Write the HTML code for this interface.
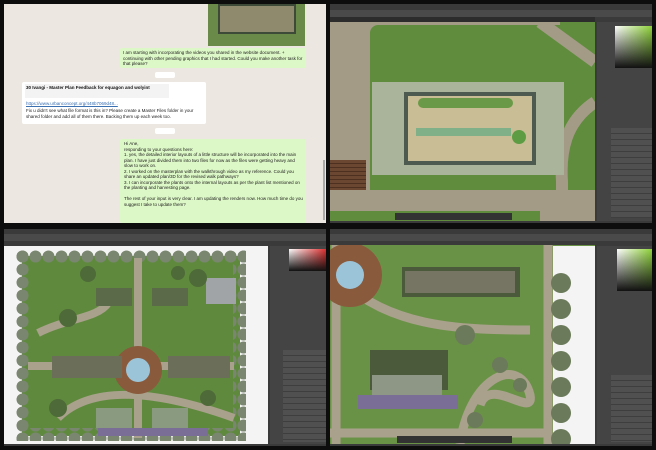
<!DOCTYPE html>
<html><head><meta charset="utf-8"><style>
*{margin:0;padding:0;box-sizing:border-box}
body{width:656px;height:450px;background:#0d0d0d;position:relative;overflow:hidden;font-family:"Liberation Sans",sans-serif}
.a{position:absolute}
.t{font-size:4.5px;color:#222;line-height:5.5px}
</style></head><body>
<!-- TOP LEFT chat -->
<div class="a" style="left:4px;top:4px;width:322px;height:219px;background:#ece8e1"></div>
<div class="a" style="left:208px;top:4px;width:97px;height:42px;background:#6a8a4a"></div>
<div class="a" style="left:218px;top:4px;width:78px;height:30px;background:#8f8a6e;border:2px solid #3d4a38"></div>
<div class="a" style="left:120px;top:48px;width:186px;height:20px;background:#dcf8c6;border-radius:2px"></div>
<div class="a t" style="left:123px;top:50px;width:180px">I am starting with incorporating the videos you shared in the website document. + continuing with other pending graphics that I had started. Could you make another task for that please?</div>
<div class="a" style="left:155px;top:72px;width:20px;height:6px;background:#fff;border-radius:2px"></div>
<div class="a" style="left:22px;top:82px;width:184px;height:42px;background:#fff;border-radius:2px"></div>
<div class="a" style="left:25px;top:84px;width:144px;height:14px;background:#f3f3f3"></div>
<div class="a t" style="left:26px;top:85px;font-weight:bold;color:#111">30 Ivangi - Master Plan Feedback for equagon and wolyint</div>
<div class="a t" style="left:26px;top:101px;color:#3a6fb0;text-decoration:underline">https://www.urbanconcept.org/448b7069d48...</div>
<div class="a t" style="left:26px;top:108px;width:175px">Fix u didn't see what file format is this in? Please create a Master Files folder in your shared folder and add all of them there. Backing them up each week too.</div>
<div class="a" style="left:155px;top:128px;width:20px;height:6px;background:#fff;border-radius:2px"></div>
<div class="a" style="left:120px;top:139px;width:186px;height:84px;background:#dcf8c6;border-radius:2px"></div>
<div class="a t" style="left:124px;top:141px;width:180px">Hi Ane,<br>responding to your questions here:<br>1. yes, the detailed interior layouts of a little structure will be incorporated into the main plan. I have just divided them into two files for now as the files were getting heavy and slow to work on.<br>2. I worked on the masterplan with the walkthrough video as my reference. Could you share an updated plan/3D for the revised walk pathways?<br>3. I can incorporate the plants onto the internal layouts as per the plant list mentioned on the planting and harvesting page.<br><br>The rest of your input is very clear. I am updating the renders now. How much time do you suggest I take to update them?</div>
<div class="a" style="left:323px;top:160px;width:2px;height:60px;background:#aaa"></div>

<!-- TOP RIGHT photoshop -->
<div class="a" style="left:330px;top:4px;width:322px;height:219px;background:#3a3a3a"></div>
<div class="a" style="left:330px;top:10px;width:322px;height:7px;background:#4a4a4a"></div>
<div class="a" style="left:330px;top:17px;width:265px;height:5px;background:#2c2c2c"></div>
<div class="a" style="left:330px;top:22px;width:265px;height:199px;background:#a39b86"></div>
<div class="a" style="left:370px;top:25px;width:225px;height:165px;background:#5f8c3d;border-radius:8px 0 0 0"></div>
<div class="a" style="left:560px;top:22px;width:35px;height:20px;background:#5f8c3d"></div>
<svg class="a" style="left:330px;top:22px" width="265" height="199"><path d="M210 0 L265 40 M265 80 C235 100 230 130 232 160 L232 199" stroke="#a39b86" stroke-width="12" fill="none"/><rect x="0" y="184" width="220" height="15" fill="#a39b86"/><rect x="0" y="188" width="210" height="12" fill="#5f8c3d"/><rect x="0" y="183" width="265" height="6" fill="#a39b86"/></svg>
<div class="a" style="left:330px;top:160px;width:36px;height:30px;background:repeating-linear-gradient(#6b4630 0 3px,#4d3020 3px 4px)"></div>
<div class="a" style="left:372px;top:82px;width:192px;height:93px;background:#a9b49a"></div>
<div class="a" style="left:404px;top:92px;width:132px;height:73px;background:#4c5a50"></div>
<div class="a" style="left:408px;top:96px;width:124px;height:65px;background:#c8bd94"></div>
<div class="a" style="left:418px;top:98px;width:95px;height:10px;background:#6a9a48;border-radius:5px"></div>
<div class="a" style="left:416px;top:128px;width:95px;height:8px;background:#80b087"></div>
<div class="a" style="left:512px;top:130px;width:14px;height:14px;background:#5e9c44;border-radius:50%"></div>
<div class="a" style="left:395px;top:213px;width:117px;height:7px;background:#333"></div>
<div class="a" style="left:597px;top:22px;width:55px;height:199px;background:#444"></div>
<div class="a" style="left:615px;top:26px;width:37px;height:42px;background:linear-gradient(to bottom,transparent,#111),linear-gradient(to right,#fff,#8ed23a)"></div>
<div class="a" style="left:611px;top:128px;width:41px;height:90px;background:repeating-linear-gradient(#505050 0 5px,#3e3e3e 5px 6px)"></div>

<!-- BOTTOM LEFT -->
<div class="a" style="left:4px;top:229px;width:322px;height:217px;background:#3a3a3a"></div>
<div class="a" style="left:4px;top:234px;width:322px;height:7px;background:#4a4a4a"></div>
<div class="a" style="left:4px;top:246px;width:264px;height:198px;background:#f4f4f4"></div>
<svg class="a" style="left:16px;top:250px" width="230" height="194">
<defs><pattern id="tr" width="13" height="13" patternUnits="userSpaceOnUse"><circle cx="6.5" cy="6.5" r="6" fill="#7a8670"/></pattern></defs>
<rect x="6" y="6" width="218" height="180" fill="#5f8a3e"/>
<rect x="0" y="0" width="230" height="13" fill="url(#tr)"/>
<rect x="0" y="178" width="230" height="13" fill="url(#tr)"/>
<rect x="0" y="0" width="13" height="191" fill="url(#tr)"/>
<rect x="217" y="0" width="13" height="191" fill="url(#tr)"/>
<g transform="translate(12,8)">
<path d="M110 0 V180 M0 108 H206 M10 75 C40 60 70 60 80 45 M30 160 C70 120 150 140 206 160" stroke="#a9a18c" stroke-width="8" fill="none"/>
<circle cx="110" cy="112" r="24" fill="#8a5a3c"/><circle cx="110" cy="112" r="12" fill="#9cc4d8"/>
<rect x="68" y="30" width="36" height="18" fill="#5b6a48"/><rect x="124" y="30" width="36" height="18" fill="#5b6a48"/>
<rect x="24" y="98" width="70" height="22" fill="#6b6e58"/><rect x="140" y="98" width="62" height="22" fill="#6b6e58"/>
<rect x="68" y="150" width="36" height="20" fill="#8a9a80"/><rect x="124" y="150" width="36" height="20" fill="#8a9a80"/>
<rect x="70" y="170" width="110" height="8" fill="#7a6e96"/>
<rect x="178" y="20" width="30" height="26" fill="#a0a4a6"/>
<g fill="#4e6a38"><circle cx="60" cy="16" r="8"/><circle cx="170" cy="20" r="9"/><circle cx="40" cy="60" r="9"/><circle cx="180" cy="140" r="8"/><circle cx="30" cy="150" r="9"/><circle cx="150" cy="15" r="7"/></g>
</g>
</svg>
<div class="a" style="left:270px;top:246px;width:56px;height:198px;background:#444"></div>
<div class="a" style="left:289px;top:249px;width:37px;height:22px;background:linear-gradient(to bottom,transparent,#111),linear-gradient(to right,#fff,#e03030)"></div>
<div class="a" style="left:283px;top:350px;width:43px;height:92px;background:repeating-linear-gradient(#505050 0 5px,#3e3e3e 5px 6px)"></div>

<!-- BOTTOM RIGHT -->
<div class="a" style="left:330px;top:229px;width:322px;height:217px;background:#3a3a3a"></div>
<div class="a" style="left:330px;top:234px;width:322px;height:7px;background:#4a4a4a"></div>
<div class="a" style="left:330px;top:245px;width:265px;height:199px;background:#6a9247"></div>
<div class="a" style="left:553px;top:246px;width:42px;height:198px;background:#f4f4f4"></div>
<svg class="a" style="left:330px;top:245px" width="265" height="199">
<path d="M6 0 V199 M10 35 C60 80 120 85 200 85 M218 0 V199 M0 188 H218 M130 199 C140 130 190 110 200 150 C205 175 160 130 150 160" stroke="#a9a18c" stroke-width="9" fill="none"/>
<circle cx="20" cy="30" r="32" fill="#8a5a3c"/><circle cx="20" cy="30" r="14" fill="#9cc4d8"/>
<rect x="72" y="22" width="118" height="30" fill="#4a5a3a"/><rect x="75" y="26" width="110" height="22" fill="#767462"/>
<rect x="40" y="105" width="78" height="40" fill="#4a5a3a"/><rect x="42" y="130" width="70" height="20" fill="#8e9686"/>
<rect x="28" y="150" width="100" height="14" fill="#7a6e96"/>
<g fill="#6b7a5a"><circle cx="231" cy="38" r="10"/><circle cx="231" cy="64" r="10"/><circle cx="231" cy="90" r="10"/><circle cx="231" cy="116" r="10"/><circle cx="231" cy="142" r="10"/><circle cx="231" cy="168" r="10"/><circle cx="231" cy="194" r="10"/><circle cx="135" cy="90" r="10"/><circle cx="170" cy="120" r="8"/><circle cx="190" cy="140" r="7"/><circle cx="145" cy="175" r="8"/></g>
</svg>
<div class="a" style="left:397px;top:436px;width:115px;height:7px;background:#333"></div>
<div class="a" style="left:597px;top:246px;width:55px;height:198px;background:#444"></div>
<div class="a" style="left:617px;top:249px;width:35px;height:42px;background:linear-gradient(to bottom,transparent,#111),linear-gradient(to right,#fff,#8ed23a)"></div>
<div class="a" style="left:611px;top:375px;width:41px;height:67px;background:repeating-linear-gradient(#505050 0 5px,#3e3e3e 5px 6px)"></div>
</body></html>
